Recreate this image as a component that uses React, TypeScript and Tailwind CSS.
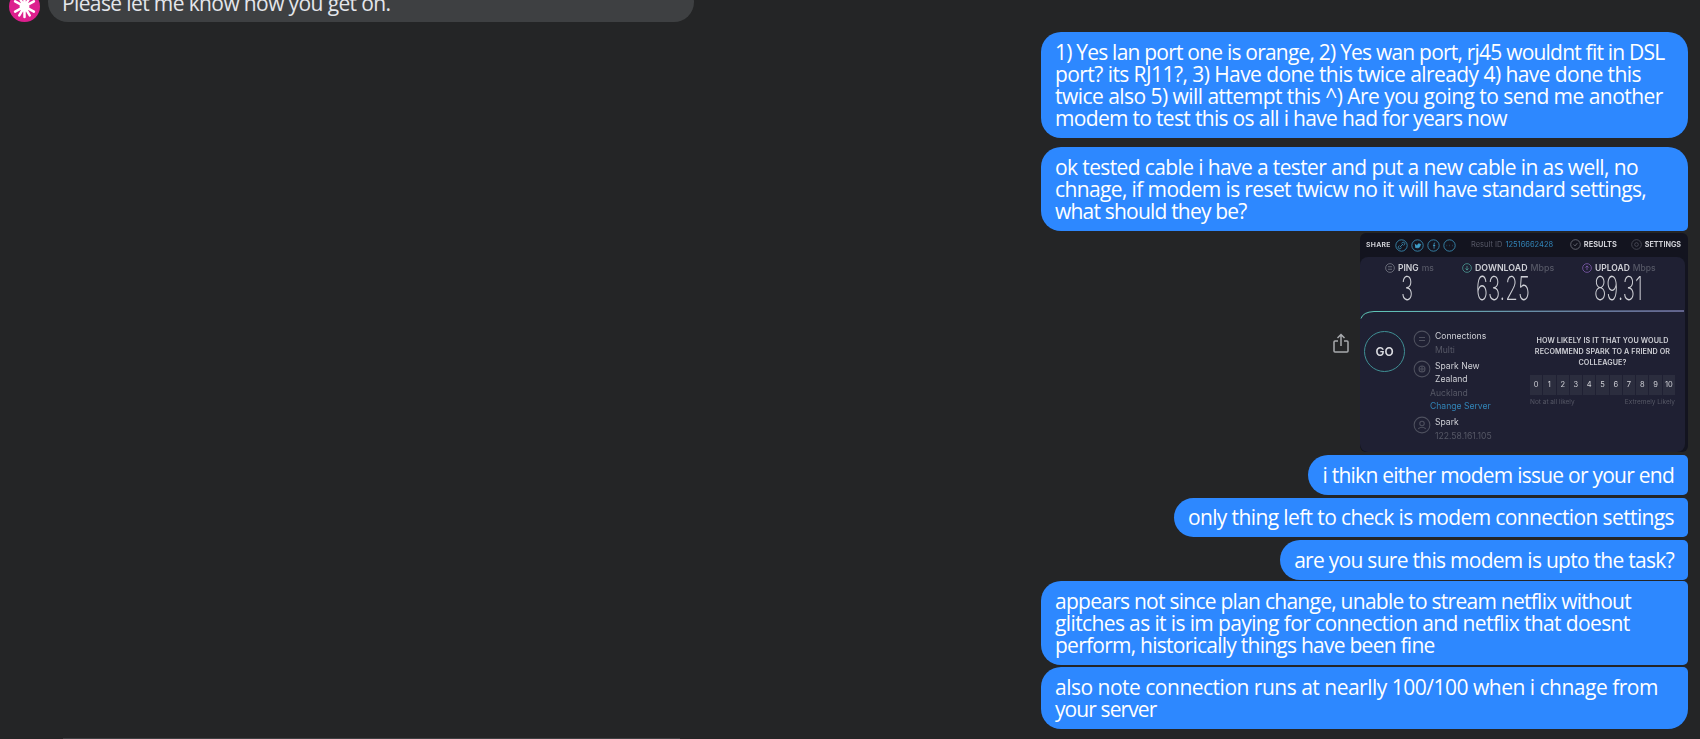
import React from "react";

const font = { fontFamily: '"Open Sans", "Noto Sans", sans-serif' };

type Line = [string, string];

function Bubble({ lines, corner, wide }: { lines: Line[]; corner: string; wide?: boolean }) {
  return (
    <div className={`${wide ? "w-[647px]" : ""} bg-[#2d88ff] text-white px-[14px] py-[8.75px] text-[21px] leading-[22px] whitespace-nowrap ${corner}`}>
      {lines.map(([t, c], i) => (
        <div key={i} className={c}>{t}</div>
      ))}
    </div>
  );
}

function Ring({ color, size, children }: { color: string; size: number; children?: React.ReactNode }) {
  return (
    <svg width={size} height={size} viewBox="0 0 24 24" fill="none" stroke={color} strokeWidth="1.4" className="shrink-0">
      <circle cx="12" cy="12" r="10.5" />
      {children}
    </svg>
  );
}

function SpeedTest() {
  return (
    <div className="w-[328px] h-[219px] bg-[#13141f] rounded-[6px] overflow-hidden flex flex-col text-[#cfd0d6] blur-[0.4px]" style={{ fontFamily: "Inter, sans-serif" }}>
      <div className="h-[24px] shrink-0 flex items-center pl-[6px] pr-[7px] text-[6.8px] font-bold">
        <span className="w-[29px] tracking-[0.3px]">SHARE</span>
        <div className="flex gap-[3px]">
          <Ring color="#3f9fc9" size={13}><path d="M9 15l6-6M8 12l-1.500 2a2.500 2.500 0 0 0 3.500 3.500l2-1.500M16 12l1.500-2a2.500 2.500 0 0 0-3.500-3.500l-2 1.500" /></Ring>
          <Ring color="#3f9fc9" size={13}><path d="M7 9c2 2 4 3 5 3 0-3 3-4 5-2l1-.500-1 2c0 4-4 6-9 4" fill="#3f9fc9" /></Ring>
          <Ring color="#3f9fc9" size={13}><path d="M13 18v-6h2M11 12h4M13 12V9q0-2 2-2" /></Ring>
          <Ring color="#3f9fc9" size={13}><path d="M7 12h.5M12 12h.5M17 12h.5" strokeWidth="2.500" /></Ring>
        </div>
        <span className="ml-[15px] font-normal text-[#565866] text-[7.500px]">Result ID</span>
        <span className="ml-[3px] font-normal text-[#3285b8] text-[7.500px]">12516662428</span>
        <div className="ml-auto flex items-center gap-[3px]">
          <Ring color="#8a8c96" size={11}><path d="M8 12l3 3 5-6" /></Ring>
          <span className="text-[7.400px]">RESULTS</span>
          <div className="w-[8px]" />
          <Ring color="#5c5e6a" size={11}><circle cx="12" cy="12" r="4" /></Ring>
          <span className="text-[7.200px]">SETTINGS</span>
        </div>
      </div>
      <div className="flex-1 bg-[#1f2033] mr-[3px] rounded-[8px] flex flex-col overflow-hidden">
        <div className="flex h-[52px] shrink-0 pt-[5px]">
          <div className="w-[102px] pl-[25px] flex flex-col">
            <div className="h-[12px] flex items-center gap-[3px] text-[8.500px] font-semibold whitespace-nowrap">
              <Ring color="#9a9ca6" size={10}><path d="M7 9h10M7 15h10" /></Ring>
              PING <span className="font-medium text-[#565866]">ms</span>
            </div>
            <div className="ml-[16px] text-[33px] leading-[29px] font-extralight scale-x-[0.62] origin-left">3</div>
          </div>
          <div className="w-[120px] flex flex-col">
            <div className="h-[12px] flex items-center gap-[3px] text-[8.800px] font-semibold whitespace-nowrap">
              <Ring color="#5bc5b5" size={10}><path d="M12 7v10M8 13l4 4 4-4" /></Ring>
              DOWNLOAD <span className="font-medium text-[#565866]">Mbps</span>
            </div>
            <div className="ml-[14px] text-[33px] leading-[29px] font-extralight scale-x-[0.62] origin-left">63.25</div>
          </div>
          <div className="flex flex-col">
            <div className="h-[12px] flex items-center gap-[3px] text-[8.500px] font-semibold whitespace-nowrap">
              <Ring color="#a070d8" size={10}><path d="M12 17V7M8 11l4-4 4 4" /></Ring>
              UPLOAD <span className="font-medium text-[#565866]">Mbps</span>
            </div>
            <div className="ml-[12px] text-[33px] leading-[29px] font-extralight scale-x-[0.62] origin-left">89.31</div>
          </div>
        </div>
        <svg width="325" height="10" viewBox="0 0 325 10" fill="none" className="shrink-0 block">
          <defs>
            <linearGradient id="curve" x1="0" x2="1" y1="0" y2="0">
              <stop offset="0" stopColor="#5bc5b5" />
              <stop offset="1" stopColor="#a5a8e8" />
            </linearGradient>
          </defs>
          <path d="M1 9.500 Q3 3 14 2.500 L324 2" stroke="url(#curve)" strokeWidth="1" />
        </svg>
        <div className="flex flex-1 min-h-0">
          <div className="w-[53px] pl-[4px] pt-[12px] shrink-0">
            <div className="w-[41px] h-[41px] rounded-full border-[1.500px] border-[#3f8f94] flex items-center justify-center text-[12px] font-semibold text-[#dcdde2]">GO</div>
          </div>
          <div className="w-[117px] shrink-0 text-[8.600px] leading-[13px] pt-[11px]">
            <div className="flex gap-[4px]">
              <Ring color="#4e505e" size={18}><path d="M8 10h8M8 14h8" /></Ring>
              <div>
                <div>Connections</div>
                <div className="text-[#565866] mt-[1px]">Multi</div>
              </div>
            </div>
            <div className="flex gap-[4px] mt-[3px]">
              <Ring color="#4e505e" size={18}><circle cx="12" cy="12" r="4" /><path d="M8 12h8M12 8v8" /></Ring>
              <div>
                <div>Spark New</div>
                <div>Zealand</div>
              </div>
            </div>
            <div className="text-[#565866] ml-[17px] mt-[1px]">Auckland</div>
            <div className="text-[#3285b8] ml-[17px]">Change Server</div>
            <div className="flex gap-[4px] mt-[3px]">
              <Ring color="#4e505e" size={18}><circle cx="12" cy="10" r="3" /><path d="M7 17q5-4 10 0" /></Ring>
              <div>
                <div>Spark</div>
                <div className="text-[#565866] mt-[1px]">122.58.161.105</div>
              </div>
            </div>
          </div>
          <div className="w-[145px] shrink-0 pt-[16px]">
            <div className="flex justify-center text-center text-[7.200px] leading-[11px] font-semibold tracking-[0.1px] whitespace-nowrap">
              <div>HOW LIKELY IS IT THAT YOU WOULD<br />RECOMMEND SPARK TO A FRIEND OR<br />COLLEAGUE?</div>
            </div>
            <div className="flex gap-px mt-[7px]">
              {["0", "1", "2", "3", "4", "5", "6", "7", "8", "9", "10"].map((n) => (
                <div key={n} className="flex-1 h-[20px] bg-[#2b2d3e] flex items-center justify-center text-[7.500px]">{n}</div>
              ))}
            </div>
            <div className="flex justify-between text-[#565866] text-[6.500px] mt-[3px] whitespace-nowrap">
              <span>Not at all likely</span>
              <span>Extremely Likely</span>
            </div>
          </div>
        </div>
      </div>
    </div>
  );
}

export default function App() {
  return (
    <div className="h-[739px] w-[1700px] overflow-hidden bg-[#242526] flex flex-col" style={font}>
      <div className="flex items-end shrink-0 -mt-[18px] pl-[9px]">
        <div className="w-[31px] h-[31px] rounded-full bg-[#dd1f8e] flex items-center justify-center shrink-0">
          <svg width="25" height="25" viewBox="0 0 24 24" fill="none" stroke="#fff" strokeWidth="2.400" strokeLinecap="round">
            <path d="M12 2v20M3 7l18 10M3 17l18-10M7 3.500l10 17M17 3.500l-10 17" />
            <circle cx="12" cy="12" r="3.500" fill="#fff" />
          </svg>
        </div>
        <div className="ml-[8px] w-[646px] h-[40px] rounded-[20px] bg-[#3e4042] text-[#e4e6eb] px-[14px] pt-[10px] text-[21px] leading-[22px] tracking-[-0.62px] whitespace-nowrap">
          Please let me know how you get on.
        </div>
      </div>

      <div className="flex flex-col items-end pr-[12px] mt-[10px] shrink-0">
        <Bubble
          wide
          corner="rounded-[20px]"
          lines={[
            ["1) Yes lan port one is orange, 2) Yes wan port, rj45 wouldnt fit in DSL", "tracking-[-0.79px]"],
            ["port? its RJ11?, 3) Have done this twice already 4) have done this", "tracking-[-0.57px]"],
            ["twice also 5) will attempt this ^) Are you going to send me another", "tracking-[-0.54px]"],
            ["modem to test this os all i have had for years now", "tracking-[-0.68px]"],
          ]}
        />
        <div className="mt-[9.5px]">
          <Bubble
            wide
            corner="rounded-[20px] rounded-br-[5px]"
            lines={[
              ["ok tested cable i have a tester and put a new cable in as well, no", "tracking-[-0.62px]"],
              ["chnage, if modem is reset twicw no it will have standard settings,", "tracking-[-0.62px]"],
              ["what should they be?", "tracking-[-0.8px]"],
            ]}
          />
        </div>
        <div className="mt-[2.5px] flex items-center gap-[11px]">
          <svg width="16" height="20" viewBox="0 0 16 20" fill="none" stroke="#a8aaad" strokeWidth="1.500">
            <path d="M5 8H2a1 1 0 0 0-1 1v9a1 1 0 0 0 1 1h12a1 1 0 0 0 1-1V9a1 1 0 0 0-1-1h-3" />
            <path d="M8 13V2M4.500 5L8 1.500 11.500 5" />
          </svg>
          <SpeedTest />
        </div>
        <div className="mt-[3px]">
          <Bubble corner="rounded-l-[20px] rounded-r-[5px]" lines={[["i thikn either modem issue or your end", "tracking-[-0.76px]"]]} />
        </div>
        <div className="mt-[3px]">
          <Bubble corner="rounded-l-[20px] rounded-r-[5px]" lines={[["only thing left to check is modem connection settings", "tracking-[-0.62px]"]]} />
        </div>
        <div className="mt-[3px]">
          <Bubble corner="rounded-l-[20px] rounded-r-[5px]" lines={[["are you sure this modem is upto the task?", "tracking-[-0.72px]"]]} />
        </div>
        <div className="mt-[1.5px]">
          <Bubble
            wide
            corner="rounded-l-[20px] rounded-r-[5px]"
            lines={[
              ["appears not since plan change, unable to stream netflix without", "tracking-[-0.74px]"],
              ["glitches as it is im paying for connection and netflix that doesnt", "tracking-[-0.62px]"],
              ["perform, historically things have been fine", "tracking-[-0.75px]"],
            ]}
          />
        </div>
        <div className="mt-[2.5px]">
          <Bubble
            wide
            corner="rounded-l-[20px] rounded-tr-[5px] rounded-br-[20px]"
            lines={[
              ["also note connection runs at nearlly 100/100 when i chnage from", "tracking-[-0.5px]"],
              ["your server", "tracking-[-0.9px]"],
            ]}
          />
        </div>
      </div>

      <div className="mt-auto ml-[63px] w-[617px] h-px bg-[#3e4042] shrink-0" />
    </div>
  );
}
